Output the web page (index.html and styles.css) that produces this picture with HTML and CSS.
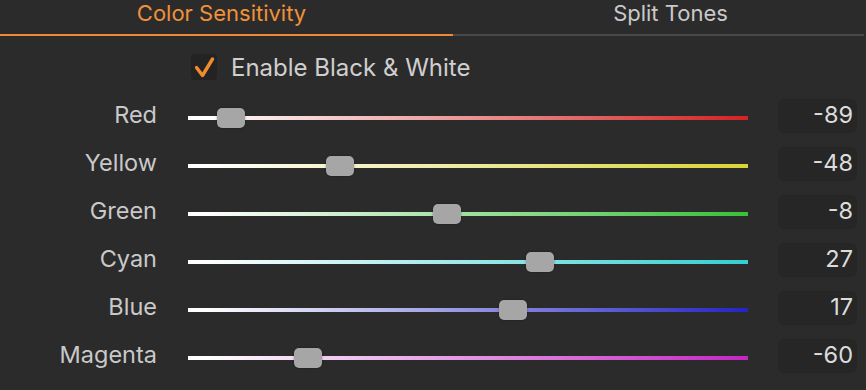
FILE: index.html
```html
<!DOCTYPE html>
<html lang="en">
<head>
  <meta charset="UTF-8">
  <title>Black &amp; White</title>
  <link rel="stylesheet" href="styles.css">
</head>
<body>
  <div class="tabs">
    <div class="tab active">Color Sensitivity</div>
    <div class="tab">Split Tones</div>
  </div>

  <label class="enable">
    <span class="checkbox">
      <svg width="26" height="26" viewBox="0 0 26 26"><path d="M5.5 13.5 L11.5 21.5 L21.5 5" fill="none" stroke="#f08c2c" stroke-width="3.4" stroke-linecap="round" stroke-linejoin="round"/></svg>
    </span>
    Enable Black &amp; White
  </label>

  <div class="sliders">
    <!-- pos = (value + 100) / 200 -->
    <div class="row red">
      <span class="label">Red</span>
      <div class="track"><span class="thumb" style="--pos: 0.055"></span></div>
      <span class="value">-89</span>
    </div>
    <div class="row yellow">
      <span class="label">Yellow</span>
      <div class="track"><span class="thumb" style="--pos: 0.26"></span></div>
      <span class="value">-48</span>
    </div>
    <div class="row green">
      <span class="label">Green</span>
      <div class="track"><span class="thumb" style="--pos: 0.46"></span></div>
      <span class="value">-8</span>
    </div>
    <div class="row cyan">
      <span class="label">Cyan</span>
      <div class="track"><span class="thumb" style="--pos: 0.635"></span></div>
      <span class="value">27</span>
    </div>
    <div class="row blue">
      <span class="label">Blue</span>
      <div class="track"><span class="thumb" style="--pos: 0.585"></span></div>
      <span class="value">17</span>
    </div>
    <div class="row magenta">
      <span class="label">Magenta</span>
      <div class="track"><span class="thumb" style="--pos: 0.2"></span></div>
      <span class="value">-60</span>
    </div>
  </div>
</body>
</html>
```

FILE: styles.css
```css
html {
  box-sizing: border-box;
}

*, *:before, *:after {
  box-sizing: inherit;
}

body {
  margin: 0;
  height: 390px;
  overflow: hidden;
  background: #2c2b2b;
  color: #c9c9c9;
  font-family: Inter, "Noto Sans", sans-serif;
}

.tabs {
  display: flex;
  width: 864px;
}

.tab {
  height: 36px;
  line-height: 27px;
  font-size: 22px;
  text-align: center;
  border-bottom: 2px solid #4a4949;
}

.tab:first-child {
  width: 453px;
  padding-right: 10px;
}

.tab:last-child {
  flex: 1;
  padding-left: 24px;
}

.tab.active {
  color: #f0913a;
  border-bottom-color: #ee8a34;
}

.enable {
  display: flex;
  align-items: center;
  gap: 14px;
  margin: 18px 0 0 191px;
  height: 26px;
  font-size: 24px;
  color: #cfcfcf;
}

.checkbox {
  display: flex;
  width: 26px;
  height: 26px;
  background: #232323;
  border-radius: 4px;
}

.sliders {
  margin-top: 14px;
}

.row {
  display: grid;
  grid-template-columns: 158px 560px 79px;
  column-gap: 30px;
  align-items: center;
  height: 48px;
}

.label {
  text-align: right;
  padding-right: 1px;
  margin-bottom: 8px;
  font-size: 23.5px;
}

.track {
  position: relative;
  height: 4px;
  background: linear-gradient(to right, #fff 0%, #fff 3%, var(--c) 100%);
}

.thumb {
  position: absolute;
  top: -8px;
  left: calc((560px - 28px) * var(--pos));
  width: 28px;
  height: 20px;
  border-radius: 5px;
  background: #a6a6a6;
  box-shadow: 0 0 2px rgba(0,0,0,0.45);
}

.value {
  height: 34px;
  margin-bottom: 4px;
  line-height: 31px;
  padding-right: 4px;
  text-align: right;
  font-size: 23.5px;
  color: #dcdcdc;
  background: #262626;
  border-radius: 6px;
}

.red { --c: #d42222; }
.yellow { --c: #d9d435; }
.green { --c: #38c038; }
.cyan { --c: #34cfd0; }
.blue { --c: #2424c4; }
.magenta { --c: #c426c4; }
```
